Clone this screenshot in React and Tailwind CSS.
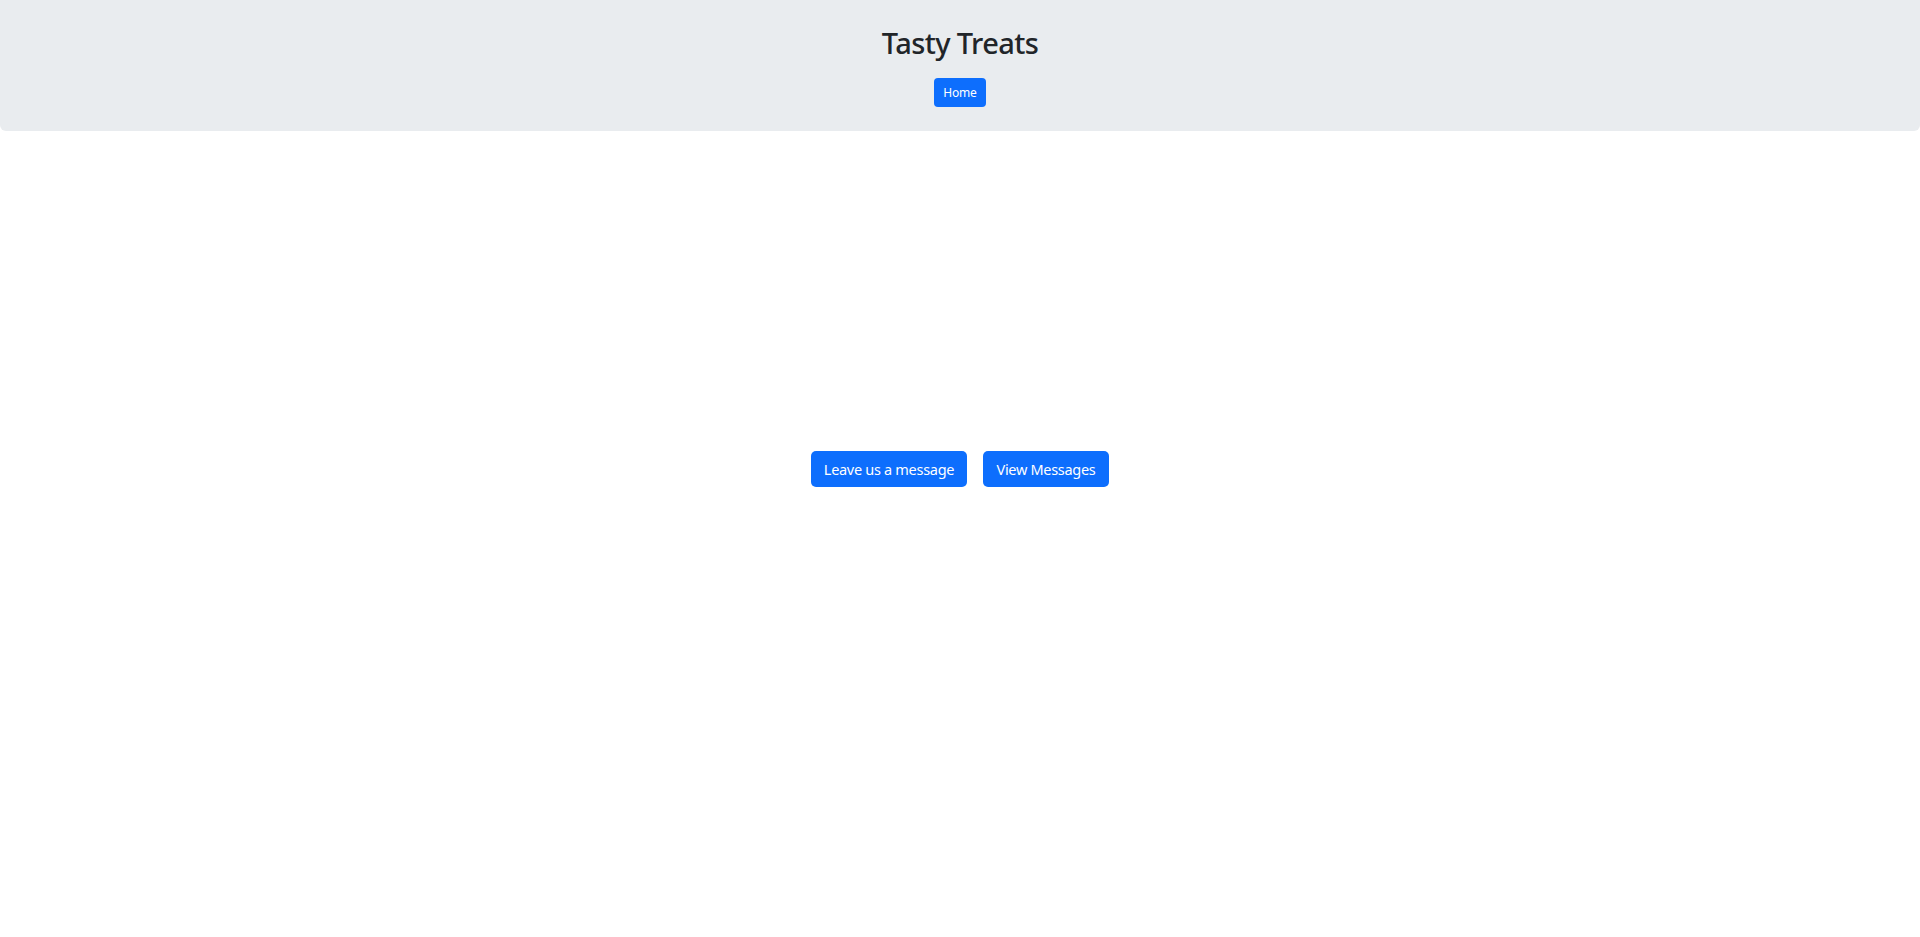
export default function App() {
  return (
    <div className="min-h-[937px] bg-white" style={{ fontFamily: '"Noto Sans", "Open Sans", sans-serif' }}>
      <header className="bg-[#e9ecef] rounded-b-md h-[131px] flex flex-col items-center pt-[23px]">
        <h1 className="text-[29px] leading-[40px] font-medium tracking-[-0.6px] text-[#212529]">Tasty Treats</h1>
        <div className="mt-[15px]">
          <button className="h-[29px] w-[52px] rounded-[4px] bg-[#0d6efd] text-white text-[12px] tracking-[-0.2px] leading-none">Home</button>
        </div>
      </header>
      <main className="flex justify-center gap-4 pt-[320px]">
        <button className="h-[36px] w-[156px] rounded-[5px] bg-[#0d6efd] text-white text-[14.5px] tracking-[-0.3px] leading-none">Leave us a message</button>
        <button className="h-[36px] w-[126px] rounded-[5px] bg-[#0d6efd] text-white text-[14.5px] tracking-[-0.3px] leading-none">View Messages</button>
      </main>
    </div>
  );
}
